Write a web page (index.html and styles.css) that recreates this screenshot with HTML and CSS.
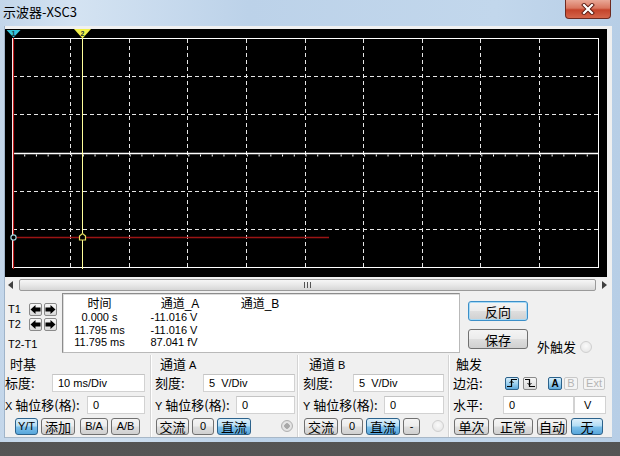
FILE: index.html
```html
<!DOCTYPE html>
<html lang="zh">
<head>
<meta charset="utf-8">
<title>示波器-XSC3</title>
<link rel="stylesheet" href="styles.css">
</head>
<body>
<div class="window">
  <div class="titlebar">
    <span class="title">示波器-XSC3</span>
    <div class="close">
      <svg width="16" height="12" viewBox="0 0 16 12"><path d="M4 2 L12 10 M12 2 L4 10" stroke="#5a1a10" stroke-width="4" stroke-linecap="square"/><path d="M4 2 L12 10 M12 2 L4 10" stroke="#ffffff" stroke-width="2.2" stroke-linecap="square"/></svg>
    </div>
  </div>
  <div class="client">
    <div class="scope">
      <svg class="plot" width="602" height="248" viewBox="0 0 602 248">
        <g stroke="#e6e6e6" stroke-width="1" stroke-dasharray="4 3" fill="none">
          <path d="M65.5 10 V239 M124.5 10 V239 M182.5 10 V239 M241.5 10 V239 M300.5 10 V239 M358.5 10 V239 M417.5 10 V239 M475.5 10 V239 M534.5 10 V239"/>
          <path d="M8 47.5 H593 M8 85.5 H593 M8 162.5 H593 M8 200.5 H593"/>
        </g>
        <rect x="7.5" y="9.5" width="586" height="229" fill="none" stroke="#ffffff" stroke-width="1"/>
        <path d="M7.5 124.5 H593.5" stroke="#ffffff" stroke-width="1.5"/>
        <path d="M7.5 126.5 H593.5" stroke="#ffffff" stroke-width="2" stroke-dasharray="1 10.72"/>
        <path d="M8 208.5 H324" stroke="#9a1414" stroke-width="1.6"/>
        <path d="M8.5 9 V240" stroke="#c01818" stroke-width="1.2"/>
        <path d="M77.5 9 V240" stroke="#ffff9a" stroke-width="1"/>
        <circle cx="8.5" cy="208.5" r="2.6" fill="#000" stroke="#9ccfd8" stroke-width="1.2"/>
        <path d="M74.5 211 V207 L77.5 204.5 L80.5 207 V211 Z" fill="#000" stroke="#e8e060" stroke-width="1.2"/>
        <path d="M1.5 1 H15.5 L8.5 8.5 Z" fill="#36c6dc"/>
        <text x="8.5" y="6.5" class="mk">1</text>
        <path d="M69 0 H86 L77.5 9.5 Z" fill="#f2f04a"/>
        <text x="77.5" y="6.5" class="mk">2</text>
      </svg>
    </div>
    <div class="scrollbar">
      <span class="sb-arrow"><svg width="6" height="8" viewBox="0 0 6 8"><path d="M5 0 V8 L0 4 Z" fill="#404040"/></svg></span>
      <div class="thumb"><span class="grip"></span></div>
      <span class="sb-arrow"><svg width="6" height="8" viewBox="0 0 6 8"><path d="M1 0 V8 L6 4 Z" fill="#404040"/></svg></span>
    </div>
    <div class="readout">
      <div class="cursors">
        <div class="crow">
          <span class="tlabel">T1</span>
          <span class="abtn"><svg width="11" height="11" viewBox="0 0 11 11"><path d="M0.5 5.5 L5.5 1 V3.6 H10.5 V7.4 H5.5 V10 Z" fill="#000"/></svg></span>
          <span class="abtn"><svg width="11" height="11" viewBox="0 0 11 11"><path d="M10.5 5.5 L5.5 1 V3.6 H0.5 V7.4 H5.5 V10 Z" fill="#000"/></svg></span>
        </div>
        <div class="crow">
          <span class="tlabel">T2</span>
          <span class="abtn"><svg width="11" height="11" viewBox="0 0 11 11"><path d="M0.5 5.5 L5.5 1 V3.6 H10.5 V7.4 H5.5 V10 Z" fill="#000"/></svg></span>
          <span class="abtn"><svg width="11" height="11" viewBox="0 0 11 11"><path d="M10.5 5.5 L5.5 1 V3.6 H0.5 V7.4 H5.5 V10 Z" fill="#000"/></svg></span>
        </div>
        <div class="crow crow-diff"><span class="tlabel tlabel-wide">T2-T1</span></div>
      </div>
      <div class="databox">
        <div class="dgrid">
          <span class="dh">时间</span><span class="dh">通道_A</span><span class="dh">通道_B</span>
          <span class="dv">0.000 s</span><span class="dv dva">-11.016 V</span><span class="dv"></span>
          <span class="dv">11.795 ms</span><span class="dv dva">-11.016 V</span><span class="dv"></span>
          <span class="dv">11.795 ms</span><span class="dv dva">87.041 fV</span><span class="dv"></span>
        </div>
      </div>
      <div class="actions">
        <span class="btn btn-focus btn-big">反向</span>
        <span class="btn btn-big">保存</span>
      </div>
      <div class="ext"><span class="ext-label">外触发</span><span class="radio"></span></div>
    </div>
    <div class="controls">
      <div class="group g-time">
        <div class="gtitle">时基</div>
        <div class="frow"><span class="flabel lw-47">标度:</span><span class="field fw-93">10 ms/Div</span></div>
        <div class="frow"><span class="flabel lw-82"><span class="lat">X</span> 轴位移(格):</span><span class="field fw-58">0</span></div>
        <div class="brow">
          <span class="btn btn-sel bw-23">Y/T</span>
          <span class="btn bw-34 cjk">添加</span>
          <span class="btn bw-28 ml-2">B/A</span>
          <span class="btn bw-29">A/B</span>
        </div>
      </div>
      <div class="group g-cha">
        <div class="gtitle">通道 <span class="lat">A</span></div>
        <div class="frow"><span class="flabel lw-48">刻度:</span><span class="field fw-92">5&nbsp;&nbsp;V/Div</span></div>
        <div class="frow"><span class="flabel lw-81"><span class="lat">Y</span> 轴位移(格):</span><span class="field fw-59">0</span></div>
        <div class="brow">
          <span class="btn bw-33 cjk">交流</span>
          <span class="btn bw-22">0</span>
          <span class="btn btn-sel bw-34 cjk">直流</span>
          <span class="radio radio-dot ml-auto"></span>
        </div>
      </div>
      <div class="group g-chb">
        <div class="gtitle">通道 <span class="lat">B</span></div>
        <div class="frow"><span class="flabel lw-50">刻度:</span><span class="field fw-91">5&nbsp;&nbsp;V/Div</span></div>
        <div class="frow"><span class="flabel lw-81"><span class="lat">Y</span> 轴位移(格):</span><span class="field fw-60">0</span></div>
        <div class="brow">
          <span class="btn bw-34 cjk">交流</span>
          <span class="btn bw-22">0</span>
          <span class="btn btn-sel bw-34 cjk">直流</span>
          <span class="btn bw-17">-</span>
          <span class="radio ml-auto"></span>
        </div>
      </div>
      <div class="group g-trig">
        <div class="gtitle">触发</div>
        <div class="frow">
          <span class="flabel lw-52">边沿:</span>
          <span class="sbtn sbtn-sel"><svg width="12" height="10" viewBox="0 0 12 10"><path d="M1 8.5 H5.5 V1.5 H11" stroke="#000" stroke-width="1.2" fill="none"/><path d="M3.5 5 L5.5 3 L7.5 5" stroke="#000" stroke-width="1" fill="none"/></svg></span>
          <span class="sbtn"><svg width="12" height="10" viewBox="0 0 12 10"><path d="M1 1.5 H5.5 V8.5 H11" stroke="#000" stroke-width="1.2" fill="none"/><path d="M3.5 5 L5.5 7 L7.5 5" stroke="#000" stroke-width="1" fill="none"/></svg></span>
          <span class="sbtn sbtn-sel sbtn-a">A</span>
          <span class="sbtn sbtn-dis">B</span>
          <span class="sbtn sbtn-dis sbtn-ext">Ext</span>
        </div>
        <div class="frow">
          <span class="flabel lw-50">水平:</span>
          <span class="field fw-71">0</span>
          <span class="field fw-32 unit">V</span>
        </div>
        <div class="brow">
          <span class="btn bw-35 cjk">单次</span>
          <span class="btn bw-40 cjk">正常</span>
          <span class="btn bw-30 cjk">自动</span>
          <span class="btn btn-sel bw-32 cjk">无</span>
        </div>
      </div>
    </div>
  </div>
</div>
</body>
</html>
```

FILE: styles.css
```css
* { box-sizing: border-box; }
html, body { margin: 0; padding: 0; }
body {
  width: 620px;
  height: 456px;
  overflow: hidden;
  background: linear-gradient(180deg, #3e3e3e 0%, #555555 100%);
  font-family: "Liberation Sans", "Noto Sans CJK SC", sans-serif;
  font-size: 11px;
  color: #000;
}
.window {
  width: 620px;
  height: 442px;
  background: linear-gradient(90deg, #c3d6ea 0%, #d4e3f2 12%, #bcd2e9 40%, #c2d7ec 80%, #b7cee6 100%);
  padding: 0 8px 4px 4px;
  display: flex;
  flex-direction: column;
}
.titlebar {
  height: 26px;
  margin-left: -4px;
  padding-left: 3px;
  display: flex;
  align-items: flex-start;
}
.title {
  font-family: "Noto Sans CJK SC", sans-serif;
  font-size: 13px;
  line-height: 16px;
  margin-top: 4px;
  color: #000;
}
.close {
  margin-left: auto;
  margin-right: 1px;
  width: 46px;
  height: 19px;
  border: 1px solid #6e2a20;
  border-top: none;
  border-radius: 0 0 4px 4px;
  background: linear-gradient(180deg, #e9a897 0%, #d9765f 45%, #c4432a 55%, #d4654a 100%);
  display: flex;
  align-items: center;
  justify-content: center;
}
.client {
  flex: 1;
  background: #f0f0f0;
  display: flex;
  flex-direction: column;
  border-left: 1px solid #9fb4ca;
}
.scope {
  margin-top: 3px;
  width: 602px;
  height: 248px;
  background: #000;
}
.plot { display: block; }
.mk {
  font-family: "Liberation Sans", sans-serif;
  font-size: 7px;
  font-weight: bold;
  fill: #1a3a40;
  text-anchor: middle;
}
.scrollbar {
  margin-top: 2px;
  height: 12px;
  display: flex;
  align-items: center;
  padding-right: 2px;
}
.sb-arrow {
  width: 12px;
  height: 12px;
  display: flex;
  align-items: center;
  justify-content: center;
}
.thumb {
  flex: 1;
  height: 12px;
  margin: 0 2px;
  border: 1px solid #9a9a9a;
  border-radius: 2px;
  background: linear-gradient(180deg, #f6f6f6 0%, #e8e8e8 50%, #d6d6d6 100%);
  display: flex;
  align-items: center;
  justify-content: center;
}
.grip {
  width: 7px;
  height: 6px;
  background: repeating-linear-gradient(90deg, #555 0 1px, transparent 1px 3px);
}
.readout {
  height: 64px;
  display: flex;
}
.cursors {
  width: 57px;
  padding-left: 3px;
  padding-top: 11px;
  display: flex;
  flex-direction: column;
  gap: 1px;
}
.crow {
  height: 14px;
  display: flex;
  align-items: center;
}
.crow-diff { margin-top: 5px; }
.tlabel {
  width: 21px;
  font-size: 11px;
  line-height: 13px;
  white-space: nowrap;
}
.tlabel-wide { width: auto; }
.abtn {
  width: 13px;
  height: 13px;
  margin-right: 2px;
  border: 1px solid #8a8a8a;
  border-radius: 2px;
  background: linear-gradient(180deg, #f7f7f7, #d9d9d9);
  display: flex;
  align-items: center;
  justify-content: center;
}
.databox {
  margin-top: 2px;
  width: 398px;
  height: 60px;
  background: #fff;
  border: 1px solid #b9b9b9;
  border-top-color: #8c8c8c;
  border-left-color: #8c8c8c;
  box-shadow: inset 1px 1px 0 #dcdcdc;
  padding-top: 3px;
}
.dgrid {
  display: grid;
  grid-template-columns: 73px 88px 72px;
}
.dh {
  font-family: "Liberation Sans", "Noto Sans CJK SC", sans-serif;
  font-size: 12px;
  line-height: 14px;
  text-align: center;
}
.dv {
  font-size: 11px;
  line-height: 12.5px;
  text-align: center;
}
.dva { padding-right: 12px; }
.actions {
  margin-left: 8px;
  width: 60px;
  padding-top: 10px;
  display: flex;
  flex-direction: column;
  gap: 8px;
}
.btn {
  display: flex;
  align-items: center;
  justify-content: center;
  height: 17px;
  border: 1px solid #707070;
  border-radius: 3px;
  background: linear-gradient(180deg, #f4f4f4 0%, #ececec 48%, #dedede 52%, #d0d0d0 100%);
  font-size: 11px;
  line-height: 13px;
  white-space: nowrap;
}
.cjk {
  font-family: "Noto Sans CJK SC", sans-serif;
  font-size: 13px;
}
.btn-big {
  height: 20px;
  font-family: "Noto Sans CJK SC", sans-serif;
  font-size: 13px;
}
.btn-focus {
  border-color: #3c8fc8;
  box-shadow: inset 0 0 0 1px #a8daf6;
}
.btn-sel {
  border-color: #2c628b;
  background: linear-gradient(180deg, #dbeffb 0%, #b2dcf4 48%, #7cc0ea 52%, #58a6db 100%);
}
.ext {
  margin-left: 9px;
  display: flex;
  align-items: flex-end;
  padding-bottom: 1px;
  gap: 4px;
}
.ext-label {
  font-family: "Noto Sans CJK SC", sans-serif;
  font-size: 13px;
  line-height: 15px;
}
.radio {
  width: 12px;
  height: 12px;
  border-radius: 50%;
  border: 1px solid #cfcfcf;
  background: radial-gradient(circle at 50% 40%, #fafafa, #e2e2e2);
  margin-bottom: 1px;
}
.radio-dot {
  border-color: #b0b0b0;
  background: radial-gradient(circle, #a8a8a8 0 2.5px, #e8e8e8 3px, #d4d4d4 100%);
}
.controls {
  flex: 1;
  display: flex;
  border-bottom: 1px solid #a8b8c8;
}
.group {
  padding-top: 2px;
  display: flex;
  flex-direction: column;
  border-right: 1px solid #d4d4d4;
  box-shadow: 1px 0 0 #ffffff;
}
.g-time { width: 146px; padding-left: 0; }
.g-cha { width: 147px; padding-left: 4px; }
.g-chb { width: 151px; padding-left: 5px; }
.g-trig { width: 162px; padding-left: 4px; border-right: none; box-shadow: none; }
.gtitle {
  height: 17px;
  font-family: "Noto Sans CJK SC", sans-serif;
  font-size: 13px;
  line-height: 14px;
  padding-left: 5px;
}
.g-time .gtitle { padding-left: 5px; }
.g-chb .gtitle { padding-left: 6px; }
.g-trig .gtitle { padding-left: 3px; }
.lat {
  font-family: "Liberation Sans", sans-serif;
  font-size: 11px;
}
.frow {
  height: 18px;
  display: flex;
  align-items: center;
  margin-bottom: 4px;
}
.flabel {
  font-family: "Noto Sans CJK SC", sans-serif;
  font-size: 13px;
  line-height: 16px;
  white-space: nowrap;
}
.lw-47 { width: 47px; }
.lw-48 { width: 48px; }
.lw-50 { width: 50px; }
.lw-52 { width: 52px; }
.lw-81 { width: 81px; }
.lw-82 { width: 82px; }
.field {
  height: 18px;
  background: #fff;
  border: 1px solid #d2d2d2;
  border-top-color: #c4c4c4;
  padding-left: 5px;
  font-size: 11px;
  line-height: 16px;
  white-space: nowrap;
}
.unit { padding-left: 9px; }
.fw-32 { width: 32px; }
.fw-58 { width: 58px; }
.fw-59 { width: 59px; }
.fw-60 { width: 60px; }
.fw-71 { width: 71px; }
.fw-91 { width: 91px; }
.fw-92 { width: 92px; }
.fw-93 { width: 93px; }
.brow {
  height: 17px;
  display: flex;
  align-items: center;
  gap: 3px;
}
.g-time .brow { padding-left: 10px; }
.g-cha .brow { padding-left: 1px; padding-right: 4px; }
.g-chb .brow { padding-left: 1px; padding-right: 4px; }
.g-trig .brow { padding-left: 1px; gap: 4px; }
.bw-17 { width: 17px; }
.bw-22 { width: 22px; }
.bw-23 { width: 23px; }
.bw-28 { width: 28px; }
.bw-29 { width: 29px; }
.bw-30 { width: 30px; }
.bw-32 { width: 32px; }
.bw-33 { width: 33px; }
.bw-34 { width: 34px; }
.bw-35 { width: 35px; }
.bw-40 { width: 40px; }
.ml-2 { margin-left: 2px; }
.ml-auto { margin-left: auto; }
.sbtn {
  width: 14px;
  height: 13px;
  margin-right: 4px;
  border: 1px solid #8a8a8a;
  border-radius: 2px;
  background: linear-gradient(180deg, #f7f7f7, #dadada);
  display: flex;
  align-items: center;
  justify-content: center;
  font-size: 10px;
  font-weight: bold;
  line-height: 11px;
}
.sbtn-sel {
  border-color: #2c628b;
  background: linear-gradient(180deg, #d4ecfa 0%, #9ed2f0 50%, #5ea9dc 100%);
}
.sbtn-a { margin-left: 7px; margin-right: 2px; }
.sbtn-dis {
  border-color: #c8c8c8;
  background: #f4f4f4;
  color: #b4b4b4;
  font-weight: normal;
  font-size: 11px;
}
.sbtn-ext { width: 22px; margin-left: 1px; }
```
